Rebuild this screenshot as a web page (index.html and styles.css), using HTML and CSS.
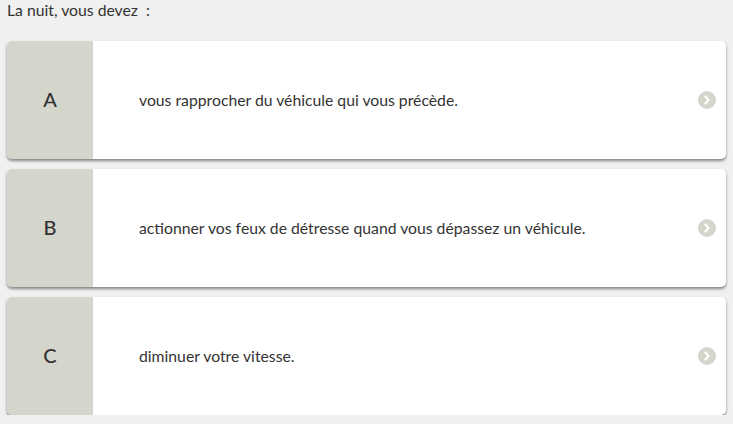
FILE: index.html
```html
<!DOCTYPE html>
<html lang="fr">
<head>
<meta charset="utf-8">
<link rel="stylesheet" href="styles.css">
</head>
<body>
<div class="question">La nuit, vous devez&nbsp; :</div>
<div class="answers">
  <div class="answer">
    <div class="letter">A</div>
    <div class="text">vous rapprocher du véhicule qui vous précède.</div>
    <div class="arrow"><svg width="18" height="18" viewBox="0 0 18 18"><circle cx="9" cy="9" r="9" fill="#d4d6cc"/><path d="M7.3 5.6 L10.6 9 L7.3 12.4" fill="none" stroke="#fff" stroke-width="2.2" stroke-linecap="round" stroke-linejoin="round"/></svg></div>
  </div>
  <div class="answer">
    <div class="letter">B</div>
    <div class="text">actionner vos feux de détresse quand vous dépassez un véhicule.</div>
    <div class="arrow"><svg width="18" height="18" viewBox="0 0 18 18"><circle cx="9" cy="9" r="9" fill="#d4d6cc"/><path d="M7.3 5.6 L10.6 9 L7.3 12.4" fill="none" stroke="#fff" stroke-width="2.2" stroke-linecap="round" stroke-linejoin="round"/></svg></div>
  </div>
  <div class="answer">
    <div class="letter">C</div>
    <div class="text">diminuer votre vitesse.</div>
    <div class="arrow"><svg width="18" height="18" viewBox="0 0 18 18"><circle cx="9" cy="9" r="9" fill="#d4d6cc"/><path d="M7.3 5.6 L10.6 9 L7.3 12.4" fill="none" stroke="#fff" stroke-width="2.2" stroke-linecap="round" stroke-linejoin="round"/></svg></div>
  </div>
</div>
</body>
</html>
```
FILE: styles.css
```css
html, body {
  margin: 0;
  padding: 0;
}
body {
  background: #f0f0f0;
  font-family: Lato, "Open Sans", sans-serif;
  color: #333;
  padding: 0 7px;
}
.question {
  font-size: 15.75px;
  line-height: 20px;
  padding-top: 0;
  height: 41px;
  box-sizing: border-box;
}
.answers {
  display: flex;
  flex-direction: column;
  gap: 10px;
}
.answer {
  display: flex;
  align-items: center;
  height: 118px;
  background: #fff;
  border-radius: 5px;
  overflow: hidden;
  box-shadow: 0 2px 3px rgba(0,0,0,0.45);
}
.letter {
  width: 86px;
  align-self: stretch;
  background: #d4d6cc;
  display: flex;
  align-items: center;
  justify-content: center;
  padding-bottom: 3px;
  box-sizing: border-box;
  font-size: 20px;
  font-weight: 500;
  color: #333;
}
.text {
  flex: 1;
  padding-left: 46px;
  padding-bottom: 2px;
  font-size: 15.75px;
}
.arrow {
  width: 18px;
  height: 18px;
  margin-right: 10px;
  display: flex;
}
```
